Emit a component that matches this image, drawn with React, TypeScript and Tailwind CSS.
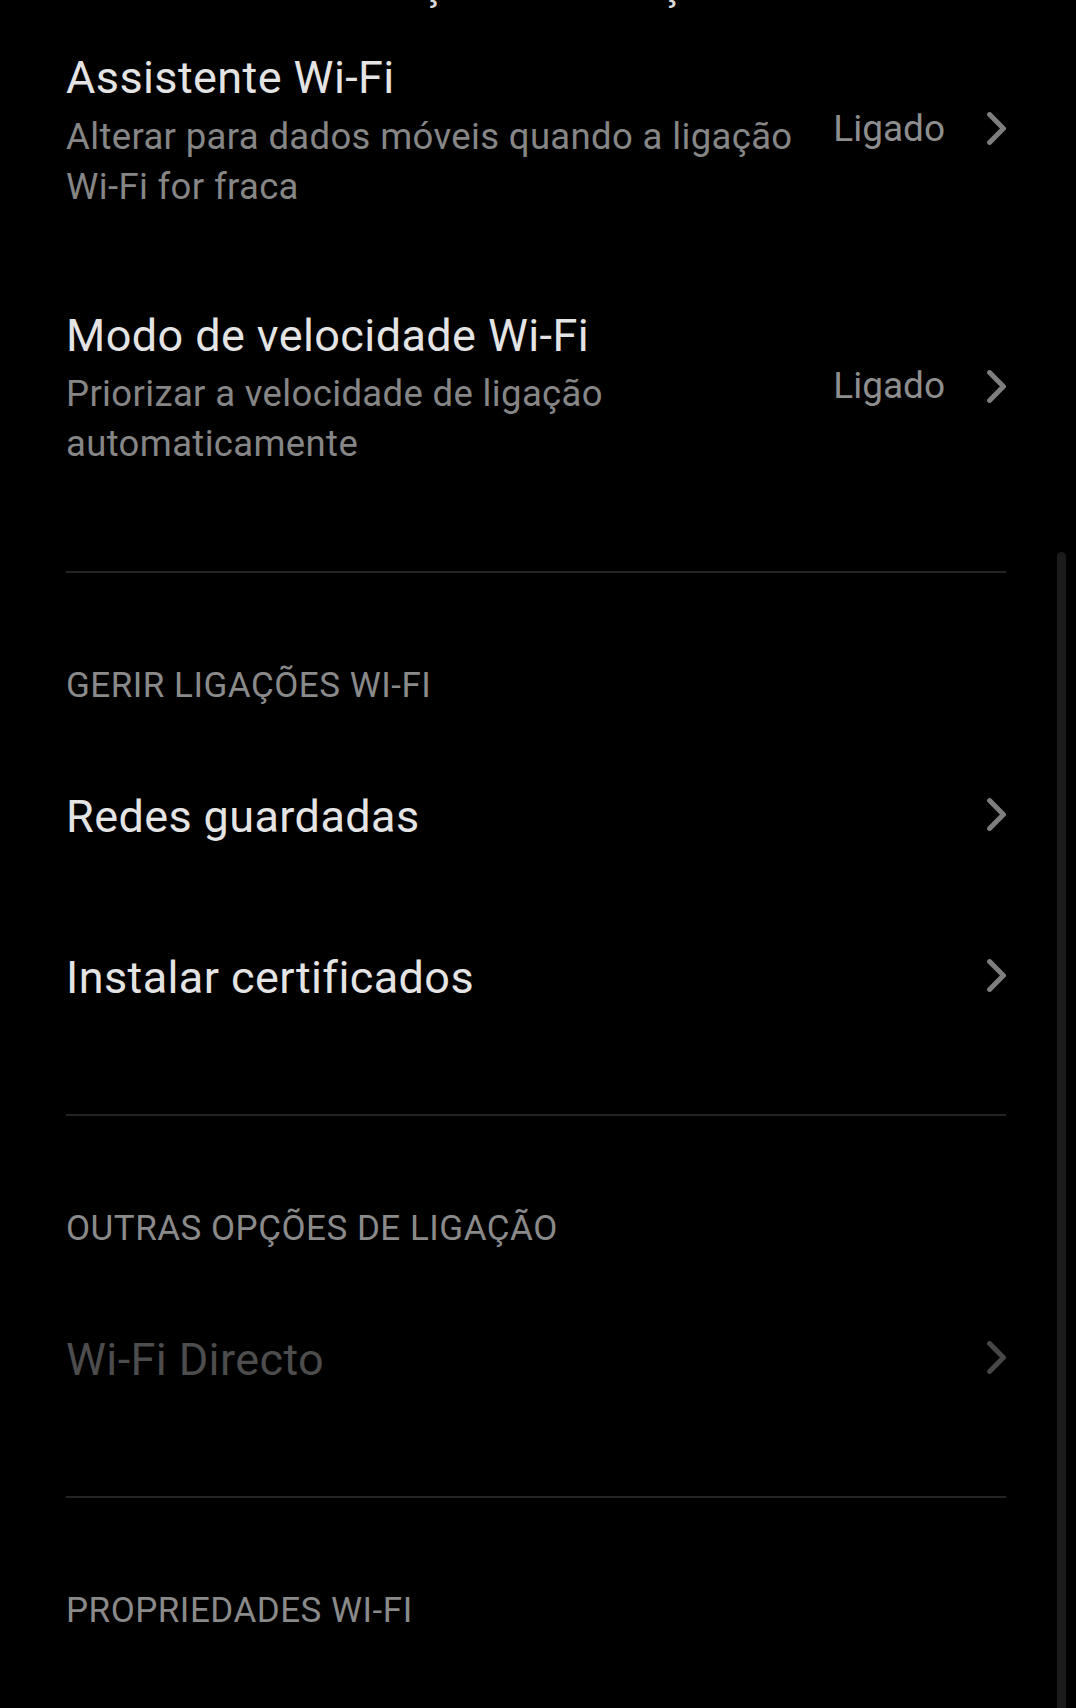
import React from 'react';

type Item = {
  title: string;
  lines?: string[];
  value?: string;
  disabled?: boolean;
};

const topItems: Item[] = [
  {
    title: 'Assistente Wi-Fi',
    lines: ['Alterar para dados móveis quando a ligação', 'Wi-Fi for fraca'],
    value: 'Ligado',
  },
  {
    title: 'Modo de velocidade Wi-Fi',
    lines: ['Priorizar a velocidade de ligação', 'automaticamente'],
    value: 'Ligado',
  },
];

const sections: { header: string; items: Item[]; gap: string }[] = [
  {
    header: 'GERIR LIGAÇÕES WI-FI',
    items: [{ title: 'Redes guardadas' }, { title: 'Instalar certificados' }],
    gap: 'mt-[53px]',
  },
  {
    header: 'OUTRAS OPÇÕES DE LIGAÇÃO',
    items: [{ title: 'Wi-Fi Directo', disabled: true }],
    gap: 'mt-[56px]',
  },
];

function Chevron({ dim }: { dim?: boolean }) {
  return (
    <svg width="19" height="33" viewBox="0 0 19 33" className="shrink-0">
      <path
        d="M2.6 2.6 L16.4 16.5 L2.6 30.4"
        fill="none"
        stroke={dim ? '#474747' : '#7e7e7e'}
        strokeWidth="5"
        strokeLinecap="round"
        strokeLinejoin="round"
      />
    </svg>
  );
}

function Row({ item }: { item: Item }) {
  const twoLine = !!item.lines;
  return (
    <div className={`flex items-center ${twoLine ? 'py-[49px]' : 'py-[54.5px]'}`}>
      <div className="flex-1 min-w-0">
        <div
          className={`text-[45px] leading-[52px] tracking-[0.4px] ${item.disabled ? 'text-[#4d4d4d]' : 'text-[#e4e4e4]'}`}
        >
          {item.title}
        </div>
        {item.lines && (
          <div className="mt-[7.5px] text-[36.5px] leading-[50px] tracking-[0.35px] text-[#868686]">
            {item.lines.map((l) => (
              <div key={l} className="whitespace-nowrap">
                {l}
              </div>
            ))}
          </div>
        )}
      </div>
      <div className={`flex items-center ${twoLine ? 'pb-[6px]' : 'pb-[4px]'}`}>
        {item.value && (
          <span className="ml-[40px] mr-[42px] text-[37px] leading-[50px] text-[#8e8e8e]">{item.value}</span>
        )}
        <Chevron dim={item.disabled} />
      </div>
    </div>
  );
}

export default function App() {
  return (
    <div
      className="relative w-[1076px] h-[1708px] bg-black overflow-hidden"
      style={{ fontFamily: 'Roboto, "Noto Sans", sans-serif' }}
    >
      {/* scroll indicator */}
      <div className="absolute right-[10px] top-[552px] h-[1200px] w-[9px] rounded-full bg-[#1c1c1c]" />

      <div className="pl-[66px] pr-[70px]">
        {/* previous item, mostly scrolled away */}
        <div className="h-[11px] overflow-hidden">
          <div className="-mt-[41px] pl-[246px] text-[43px] leading-[50px] text-[#d8d8d8] whitespace-nowrap">
            Definições de seleção
          </div>
        </div>

        <div className="-mt-[8px]">
          {topItems.map((it) => (
            <Row key={it.title} item={it} />
          ))}
        </div>

        {sections.map((s) => (
          <div key={s.header}>
            <div className={`${s.gap} h-[2px] bg-[#242424]`} />
            <div className="pt-[93px] pb-[30px] text-[35px] leading-[40px] tracking-[0.5px] text-[#8a8a8a]">
              {s.header}
            </div>
            {s.items.map((it) => (
              <Row key={it.title} item={it} />
            ))}
          </div>
        ))}

        <div className="mt-[56px] h-[2px] bg-[#242424]" />
        <div className="pt-[93px] text-[35px] leading-[40px] tracking-[0.5px] text-[#8a8a8a]">PROPRIEDADES WI-FI</div>
      </div>
    </div>
  );
}
